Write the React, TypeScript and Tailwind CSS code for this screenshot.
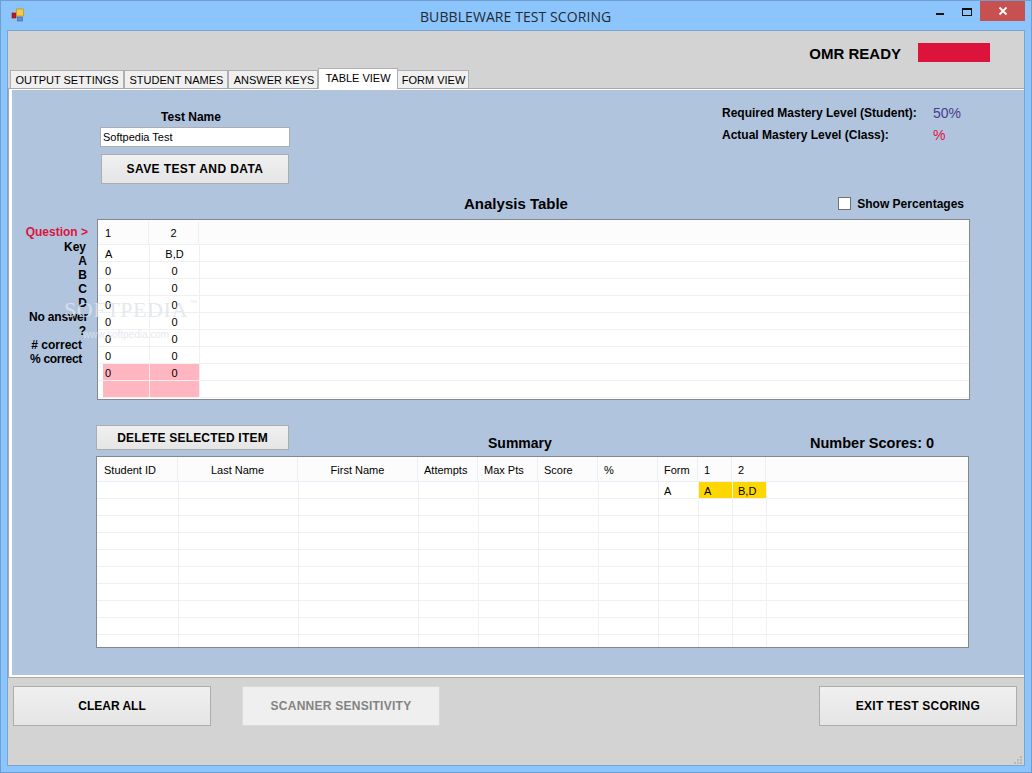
const sans = "font-['Liberation_Sans',Arial,sans-serif]";

const labels: [string, string, string][] = [
  ["Question >", "h-[15px] pr-[9px]", "text-[#dc143c]"],
  ["Key", "h-[14px] pr-[11px]", ""],
  ["A", "h-[14px] pr-[10px]", ""],
  ["B", "h-[14px] pr-[10px]", ""],
  ["C", "h-[14px] pr-[10px]", ""],
  ["D", "h-[14px] pr-[10px]", ""],
  ["No answer", "h-[14px] pr-[9px] tracking-[-0.2px]", ""],
  ["?", "h-[14px] pr-[11px]", ""],
  ["# correct", "h-[14px] pr-[15px]", ""],
  ["% correct", "h-[14px] pr-[15px] tracking-[-0.3px]", ""],
];

const analysisRows: [string, string, boolean][] = [
  ["A", "B,D", false],
  ["0", "0", false],
  ["0", "0", false],
  ["0", "0", false],
  ["0", "0", false],
  ["0", "0", false],
  ["0", "0", false],
  ["0", "0", true],
  ["", "", true],
];

const summaryColumns: [string, string, string][] = [
  ["Student ID", "w-[81px]", "pl-[7px] text-left"],
  ["Last Name", "w-[120px]", "text-center"],
  ["First Name", "w-[120px]", "text-center"],
  ["Attempts", "w-[60px]", "pl-[6px] text-left"],
  ["Max Pts", "w-[60px]", "pl-[6px] text-left"],
  ["Score", "w-[60px]", "pl-[6px] text-left"],
  ["%", "w-[60px]", "pl-[6px] text-left"],
  ["Form", "w-[40px]", "pl-[6px] text-left"],
  ["1", "w-[34px]", "pl-[6px] text-left"],
  ["2", "w-[34px]", "pl-[6px] text-left"],
];

const dataWidths = [
  "w-[82px]", "w-[120px]", "w-[120px]", "w-[60px]", "w-[60px]",
  "w-[60px]", "w-[60px]", "w-[40px]", "w-[34px]", "w-[34px]",
];

function AppIcon() {
  return (
    <svg width="14" height="14" viewBox="0 0 14 14" className="shrink-0">
      <rect x="0.5" y="0.5" width="13" height="13" fill="#a9bdd2" opacity="0.55" />
      <rect x="1" y="5" width="4" height="5" fill="#c4161c" stroke="#7a1a1a" strokeWidth="0.6" />
      <rect x="5.5" y="1" width="7" height="7" fill="#f6cb3f" stroke="#b58a1c" strokeWidth="0.6" />
      <rect x="6.5" y="9" width="5" height="4" fill="#5a8fdc" stroke="#3c64a8" strokeWidth="0.6" />
    </svg>
  );
}

function WinButton({ label, className }: { label: string; className: string }) {
  return (
    <button
      className={`flex items-center justify-center border border-[#adadad] bg-gradient-to-b from-[#f0f0f0] to-[#e5e5e5] font-bold text-black ${className}`}
    >
      {label}
    </button>
  );
}

function AnalysisGrid() {
  return (
    <div className="h-[181px] w-[873px] overflow-hidden border border-[#828790] bg-white text-[11px]">
      <div className="flex h-[25px] border-b border-[#eaf0f8] bg-[#fcfcfc] pt-px">
        <div className="flex w-[51px] items-center border-r border-[#eaf0f8] pl-[7px]">1</div>
        <div className="flex w-[50px] items-center justify-center border-r border-[#eaf0f8]">2</div>
      </div>
      {analysisRows.map((row, i) => (
        <div key={i} className="flex h-[17px] border-b border-[#f0f0f0]">
          <div className="flex w-[52px] border-r border-[#f0f0f0] pl-[5px]">
            <div className={`flex-1 pl-[2px] pt-[2px] ${row[2] ? "bg-[#ffb6c1]" : ""}`}>{row[0]}</div>
          </div>
          <div className={`w-[50px] border-r border-[#f0f0f0] pt-[2px] text-center ${row[2] ? "bg-[#ffb6c1]" : ""}`}>
            {row[1]}
          </div>
        </div>
      ))}
    </div>
  );
}

function SummaryGrid() {
  return (
    <div className="ml-[84px] h-[192px] w-[873px] overflow-hidden border border-[#828790] bg-white text-[11px]">
      <div className="flex h-[25px] border-b border-[#eaf0f8] bg-[#fcfcfc]">
        {summaryColumns.map(([name, w, align]) => (
          <div key={name} className={`h-full border-r border-[#eaf0f8] leading-[26px] ${w} ${align}`}>
            {name}
          </div>
        ))}
      </div>
      {Array.from({ length: 10 }).map((_, r) => (
        <div key={r} className="flex h-[17px] border-b border-[#f0f0f0]">
          {dataWidths.map((w, c) => {
            const text = r === 0 ? ["", "", "", "", "", "", "", "A", "A", "B,D"][c] : "";
            const yellow = r === 0 && c >= 8;
            return (
              <div
                key={c}
                className={`h-full border-r border-[#f0f0f0] pl-[5px] leading-[18px] ${w} ${yellow ? "bg-[#ffd700]" : ""}`}
              >
                {text}
              </div>
            );
          })}
        </div>
      ))}
    </div>
  );
}

function ResizeGrip() {
  const dots: [number, number][] = [
    [8, 0], [5, 3], [8, 3], [2, 6], [5, 6], [8, 6],
  ];
  return (
    <svg width="10" height="8" viewBox="0 0 10 8" className="absolute bottom-[1px] right-[2px]">
      {dots.map(([x, y]) => (
        <rect key={`${x}-${y}`} x={x} y={y} width="2" height="2" fill="#b8b8b8" />
      ))}
    </svg>
  );
}

export default function App() {
  return (
    <div className={`flex h-[773px] w-[1032px] flex-col overflow-hidden border border-[#6f9fd0] bg-[#8bc5fb] text-[12px] leading-[14px] text-black ${sans}`}>
      {/* Title bar */}
      <div className="flex h-[29px] shrink-0">
        <div className="flex w-[935px] shrink-0 items-start pl-[10px] pt-[7px]">
          <AppIcon />
          <div className="ml-[395px] whitespace-nowrap pt-[1px] text-[14px] leading-[16px] tracking-[0.08px] text-[#1f2a36] [font-family:'Open_Sans',sans-serif]">
            BUBBLEWARE TEST SCORING
          </div>
        </div>
        <div className="flex items-start">
          <div className="mt-[12px] h-[2px] w-[8px] bg-[#111]" />
          <div className="ml-[18px] mt-[7px] h-[8px] w-[10px] border border-t-2 border-[#111]" />
          <div className="ml-[8px] flex h-[20px] w-[45px] items-center justify-center bg-[#c75050]">
            <svg width="10" height="10" viewBox="0 0 10 10">
              <path d="M1.5 1.5 L8.5 8.5 M8.5 1.5 L1.5 8.5" stroke="#fff" strokeWidth="1.8" />
            </svg>
          </div>
        </div>
      </div>

      {/* Client area */}
      <div className="ml-[6px] flex h-[736px] w-[1018px] shrink-0 flex-col border border-[#7ba5d0] bg-[#d3d3d3]">
        {/* OMR status */}
        <div className="flex h-[37px] shrink-0 items-start justify-end pr-[34px] pt-[12px]">
          <div className="mr-[17px] mt-[2px] text-[15px] leading-[17px] font-bold">OMR READY</div>
          <div className="h-[19px] w-[72px] bg-[#dc143c]" />
        </div>

        {/* Tabs */}
        <div className="flex h-[21px] shrink-0 items-end whitespace-nowrap border-b border-[#a8a8a8] pl-[2px] text-[11px]">
          <div className="flex h-[18px] w-[114px] items-center justify-center border border-b-0 border-[#b0b0b0] bg-[#f0f0f0]">OUTPUT SETTINGS</div>
          <div className="flex h-[18px] w-[104px] items-center justify-center border border-b-0 border-[#b0b0b0] bg-[#f0f0f0] pl-px">STUDENT NAMES</div>
          <div className="flex h-[18px] w-[90px] items-center justify-center border border-b-0 border-[#b0b0b0] bg-[#f0f0f0] pl-[2px]">ANSWER KEYS</div>
          <div className="relative -mb-px flex h-[21px] w-[80px] items-start justify-center border border-b-0 border-[#b0b0b0] bg-white pt-[2px]">TABLE VIEW</div>
          <div className="flex h-[18px] w-[71px] items-center justify-center border border-b-0 border-l-0 border-[#b0b0b0] bg-[#f0f0f0] pl-px">FORM VIEW</div>
        </div>

        {/* Tab page */}
        <div className="flex h-[589px] shrink-0 flex-col border-b border-l border-[#a8a8a8] bg-white">
          <div className="ml-[3px] mt-px flex h-[585px] flex-col bg-[#b0c4de]">
            {/* Test name and mastery */}
            <div className="flex h-[94px] shrink-0 justify-between">
              <div className="ml-[88px] flex w-[190px] flex-col pt-[20px]">
                <div className="pr-[8px] text-center font-bold">Test Name</div>
                <div className="mt-[3px] flex h-[20px] items-center border border-[#abadb3] bg-white pl-[2px] text-[11px]">Softpedia Test</div>
                <WinButton label="SAVE TEST AND DATA" className="ml-px mt-[7px] h-[30px] w-[188px] tracking-[0.4px]" />
              </div>
              <div className="flex w-[302px] flex-col gap-[8px] pt-[16px] font-bold">
                <div className="flex items-center">
                  <span className="w-[211px]">Required Mastery Level (Student):</span>
                  <span className="text-[14px] font-normal text-[#483d8b]">50%</span>
                </div>
                <div className="flex items-center">
                  <span className="w-[211px]">Actual Mastery Level (Class):</span>
                  <span className="text-[14px] font-normal text-[#dc143c]">%</span>
                </div>
              </div>
            </div>

            {/* Analysis heading */}
            <div className="mt-[12px] grid h-[23px] shrink-0 grid-cols-[1fr_auto_1fr] pr-[4px]">
              <div />
              <div className="text-[15px] leading-[15px] font-bold">Analysis Table</div>
              <div className="flex items-start justify-end pr-[56px] pt-px">
                <span className="h-[13px] w-[13px] border border-[#707070] bg-white" />
                <span className="ml-[6px] font-bold">Show Percentages</span>
              </div>
            </div>

            {/* Analysis table */}
            <div className="relative flex shrink-0">
              <div className="flex w-[85px] flex-col items-stretch pt-[6px] text-right font-bold">
                {labels.map(([text, pad, color]) => (
                  <div key={text} className={`${pad} ${color}`}>{text}</div>
                ))}
              </div>
              <AnalysisGrid />
              <div className="pointer-events-none absolute left-[52px] top-[80px] text-[#dfe4ec] opacity-80">
                <div className="flex items-start">
                  <span className="text-[22px] leading-[22px] tracking-[0.6px] [font-family:'Liberation_Serif',serif]">SOFTPEDIA</span>
                  <span className="ml-[2px] text-[7px] leading-[8px]">™</span>
                </div>
                <div className="ml-[19px] mt-[8px] text-[10px] leading-[11px]">www.softpedia.com</div>
              </div>
            </div>

            {/* Summary heading */}
            <div className="ml-[84px] mt-[25px] flex h-[31px] shrink-0 items-start">
              <WinButton label="DELETE SELECTED ITEM" className="h-[25px] w-[193px] tracking-[0.2px]" />
              <div className="ml-[199px] mt-[11px] w-[64px] text-[14px] font-bold">Summary</div>
              <div className="ml-[258px] mt-[11px] text-[14.5px] font-bold">Number Scores: 0</div>
            </div>

            <SummaryGrid />
          </div>
        </div>

        {/* Footer */}
        <div className="relative flex flex-1 items-start pl-[5px] pr-[7px] pt-[8px]">
          <WinButton label="CLEAR ALL" className="h-[40px] w-[198px]" />
          <div className="ml-[31px] flex h-[40px] w-[198px] items-center justify-center border border-[#d9d9d9] bg-[#efefef] font-bold tracking-[0.25px] text-[#838383]">
            SCANNER SENSITIVITY
          </div>
          <WinButton label="EXIT TEST SCORING" className="ml-auto h-[40px] w-[198px] tracking-[0.25px]" />
          <ResizeGrip />
        </div>
      </div>
    </div>
  );
}
